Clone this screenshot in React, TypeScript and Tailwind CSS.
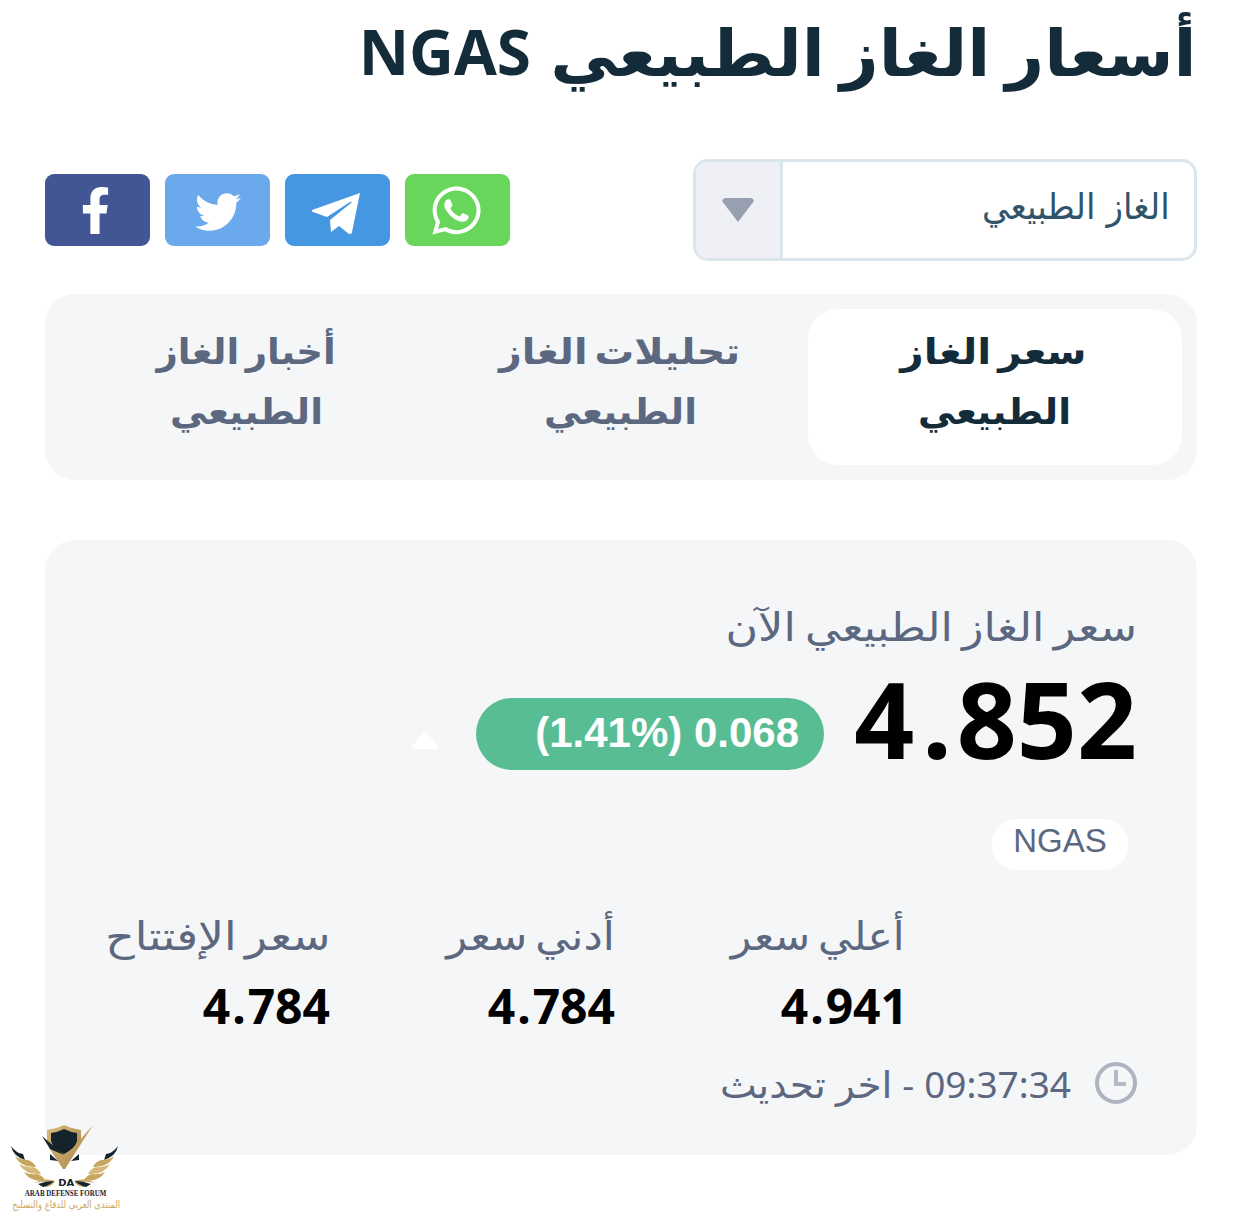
import React from 'react';
import { FaFacebookF, FaTwitter, FaWhatsapp } from 'react-icons/fa';

const TelegramIcon: React.FC = () => (
  <svg viewBox="0 0 48 41" className="mt-[6px] mr-[3px] h-[41px] w-[48px] fill-white">
    <path d="M48 0L0 17q-1 2 1 2l14 5L38 9q3-1 1 1L18 27l1 12 8-6 10 8q3 0 3-2z" />
  </svg>
);

const shareLinks = [
  { name: 'WhatsApp', color: 'bg-[#67d65b]', icon: <FaWhatsapp className="mr-[3px] h-[55px] w-[55px]" /> },
  { name: 'Telegram', color: 'bg-[#4497e0]', icon: <TelegramIcon /> },
  { name: 'Twitter', color: 'bg-[#6aaaec]', icon: <FaTwitter className="mt-[3px] h-[46px] w-[46px]" /> },
  { name: 'Facebook', color: 'bg-[#425696]', icon: <FaFacebookF className="mr-[4px] h-[47px] w-[47px]" /> },
];

const tabs = [
  { first: 'سعر الغاز', second: 'الطبيعي', active: true, stretch: 'scale-x-[1.13]' },
  { first: 'تحليلات الغاز', second: 'الطبيعي', active: false, stretch: 'scale-x-[1.1]' },
  { first: 'أخبار الغاز', second: 'الطبيعي', active: false, stretch: 'scale-x-[1.03]' },
];

const stats = [
  { label: 'أعلي سعر', value: '4.941', width: 'w-[290px]', stretch: 'scale-x-[1.09]', shift: '-mr-[3px]' },
  { label: 'أدني سعر', value: '4.784', width: 'w-[285px]', stretch: 'scale-x-[1.11]', shift: '' },
  { label: 'سعر الإفتتاح', value: '4.784', width: 'w-[225px]', stretch: 'scale-x-[1.17]', shift: '' },
];

const Header: React.FC = () => (
  <h1 className="flex h-[159px] text-[61px] leading-[106px] font-bold whitespace-nowrap text-[#142b3a]">
    <span className="w-[642px] text-[64px] leading-[104px]">
      <span className="inline-block origin-right scale-x-[1.05] [word-spacing:-2px]">أسعار الغاز الطبيعي</span>
    </span>
    <span className="mr-[24px] text-[62px] leading-[103px]">NGAS</span>
  </h1>
);

const Toolbar: React.FC = () => (
  <div className="flex h-[102px] items-center justify-between">
    <div className="flex h-[102px] w-[504px] overflow-hidden rounded-[15px] border-[3px] border-[#dbe5ec] bg-white">
      <div className="flex-1 pr-6 font-['DejaVu_Sans',sans-serif] text-[36px] leading-[90px] text-[#30556b]">
        <span className="inline-block origin-right scale-x-[0.95]">الغاز الطبيعي</span>
      </div>
      <div className="flex w-[87px] items-center justify-center border-r-[3px] border-[#dbe5ec] bg-[#eff0f5]">
        <svg viewBox="0 0 32 24" className="h-6 w-8 fill-[#989fb0]">
          <path d="M4 0h24q3 0 4 3L16 24 0 3Q1 0 4 0z" />
        </svg>
      </div>
    </div>
    <div className="flex gap-[15px]">
      {shareLinks.map((link) => (
        <a
          key={link.name}
          aria-label={link.name}
          className={`flex h-[72px] w-[105px] items-center justify-center rounded-[9px] text-white ${link.color}`}
        >
          {link.icon}
        </a>
      ))}
    </div>
  </div>
);

const Tabs: React.FC = () => (
  <div className="mt-[33px] flex h-[186px] rounded-[30px] bg-[#f4f6f8] p-[15px]">
    {tabs.map((tab) => (
      <div
        key={tab.first}
        className={`flex flex-1 flex-col items-center rounded-[30px] pt-3 text-[36px] leading-[60px] font-bold whitespace-nowrap [word-spacing:-3px] ${
          tab.active ? 'bg-white text-[#142b3a]' : 'text-[#5c6780]'
        }`}
      >
        <span className={`mr-[3px] ${tab.stretch}`}>{tab.first}</span>
        <span className="scale-x-[1.04]">{tab.second}</span>
      </div>
    ))}
  </div>
);

const Price: React.FC<{ value: string; gap: string }> = ({ value, gap }) => {
  const [whole, decimals] = value.split('.');
  return (
    <span dir="ltr" className="inline-block">
      {whole}
      <span className={gap}>.</span>
      {decimals}
    </span>
  );
};

const PriceCard: React.FC = () => (
  <div className="mt-[60px] h-[615px] rounded-[30px] bg-[#f4f6f8] pt-[54px] pr-[60px] text-[#5c6780]">
    <div className="h-[64px] text-[39px] leading-[64px] whitespace-nowrap">
      <span className="inline-block origin-right scale-x-[1.14] [word-spacing:-2px]">سعر الغاز الطبيعي الآن</span>
    </div>
    <div className="flex h-[142px]">
      <span className="w-[284px] text-[105px] leading-[121px] font-bold whitespace-nowrap text-black">
        <Price value="4.852" gap="mr-[5px] ml-[8px]" />
      </span>
      <span
        dir="ltr"
        className="mt-10 mr-[29px] flex h-[72px] w-[348px] items-center justify-end rounded-full bg-[#59bd93] pr-[25px] pb-1 font-['Liberation_Sans',sans-serif] text-[42px] font-bold text-white"
      >
        (1.41%) 0.068
      </span>
      <svg viewBox="0 0 26 18" className="mt-[73px] mr-[38px] h-[18px] w-[26px] fill-white">
        <path d="M13 0l13 15q0 3-3 3H3q-3 0-3-3z" />
      </svg>
    </div>
    <div className="mt-[19px] mr-[9px] flex h-[51px] w-[136px] items-center justify-center rounded-[24px] bg-white pb-2 font-['Liberation_Sans',sans-serif] text-[33px]">
      NGAS
    </div>
    <div className="mt-[34px] flex pr-[232px]">
      {stats.map((stat) => (
        <div key={stat.label} className={`shrink-0 whitespace-nowrap ${stat.width}`}>
          <div className="h-[64px] text-[39px] leading-[62px]">
            <span className={`inline-block origin-right [word-spacing:-3px] ${stat.stretch}`}>{stat.label}</span>
          </div>
          <div className={`h-[76px] text-[48px] leading-[76px] font-bold text-black ${stat.shift}`}>
            <Price value={stat.value} gap="mx-[2px]" />
          </div>
        </div>
      ))}
    </div>
    <div className="mt-[7px] flex h-[64px] items-center">
      <svg viewBox="0 0 42 42" className="h-[42px] w-[42px]" fill="none">
        <circle cx="21" cy="21" r="19" stroke="#adb3bf" strokeWidth="4" />
        <path d="M21 8v14h10" stroke="#b4bac4" strokeWidth="4" />
      </svg>
      <span dir="ltr" className="mr-6 flex items-center pt-0.5 text-[37px] leading-[64px]">
        <span dir="rtl" className="origin-right scale-x-[1.055]">
          اخر تحديث
        </span>
        <span className="mx-[10px]">-</span>
        <span>09:37:34</span>
      </span>
    </div>
  </div>
);

const Wing: React.FC = () => (
  <g>
    <path d="M3 24q5 7 12 8l2 6Q5 34 3 24z" fill="#15232d" />
    <path d="M7 34q5 4 13 4 6 2 8 7Q12 45 7 34z" fill="#c9a65f" />
    <path d="M11 42q7 4 14 3 6 2 8 7Q17 53 11 42z" fill="#d6b97a" />
    <path d="M16 50q6 3 13 2 5 1 8 6-14 3-21-8z" fill="#c9a65f" />
    <path d="M26 61q11-6 21-2-3 6-11 6 3-5 4-5-6-1-14 1z" fill="#c9a65f" />
    <path d="M30 62q8-3 16-3-4 4-11 6z" fill="#15232d" />
  </g>
);

const ForumMark: React.FC = () => (
  <div dir="ltr" className="absolute top-[1122px] left-[8px] flex w-[116px] flex-col items-center">
    <svg viewBox="0 0 116 66" className="h-[66px] w-[116px]">
      <defs>
        <linearGradient id="gold" x1="0" y1="0" x2="1" y2="1">
          <stop offset="0" stopColor="#d9bd82" />
          <stop offset="1" stopColor="#a98443" />
        </linearGradient>
      </defs>
      <path d="M39 8q9-1 17-5 8 4 17 5v11q-2 9-17 17-15-8-17-17z" fill="url(#gold)" />
      <path d="M43 11q7-1 13-4 6 3 13 4v8q-2 8-13 13-11-5-13-13z" fill="#15232d" />
      <path d="M85 3L57 47h-2L41 26l15 7 9-7z" fill="url(#gold)" />
      <path d="M34 14l22 19-14-6zM42 32v6l8 1zM71 32v6l-8 1z" fill="#15232d" />
      <Wing />
      <g transform="translate(113 0) scale(-1 1)">
        <Wing />
      </g>
    </svg>
    <span className="-mt-[10px] h-[10px] scale-x-[1.1] font-['DejaVu_Sans',sans-serif] text-[9px] leading-[10px] font-bold text-[#15232d]">
      DA
    </span>
    <span className="h-[10px] scale-x-[0.79] font-['Liberation_Serif',serif] text-[8.8px] leading-[10px] font-bold whitespace-nowrap text-[#15232d]">
      ARAB DEFENSE FORUM
    </span>
    <span
      dir="rtl"
      className="h-[14px] scale-x-[0.84] font-['DejaVu_Sans',sans-serif] text-[10px] leading-[14px] whitespace-nowrap text-[#c9a65f]"
    >
      المنتدى العربي للدفاع والتسليح
    </span>
  </div>
);

const App: React.FC = () => {
  return (
    <div
      dir="rtl"
      className="relative h-[1214px] w-[1242px] overflow-hidden bg-white px-[45px] font-['Noto_Sans','DejaVu_Sans',sans-serif]"
    >
      <Header />
      <Toolbar />
      <Tabs />
      <PriceCard />
      <ForumMark />
    </div>
  );
};

export default App;
